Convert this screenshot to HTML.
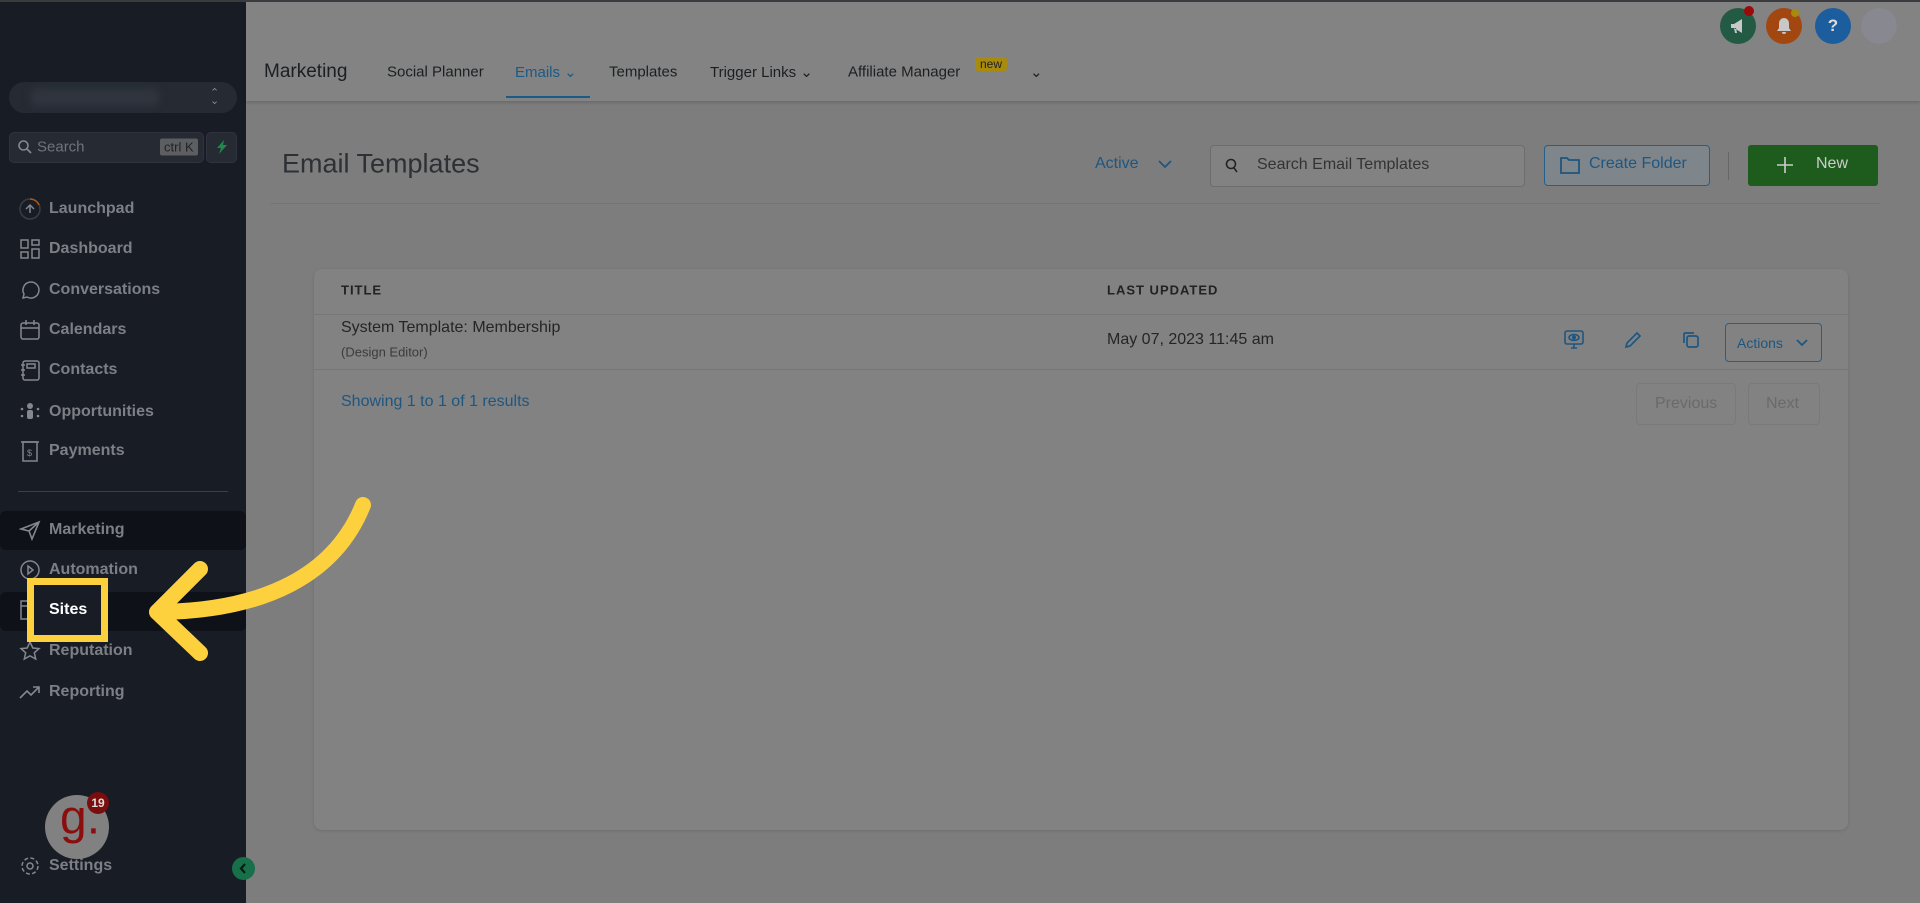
<!DOCTYPE html>
<html><head><meta charset="utf-8"><style>
*{box-sizing:border-box;margin:0;padding:0}
body{width:1920px;height:903px;overflow:hidden;background:#7d7d7d;font-family:"Liberation Sans",sans-serif;position:relative}
.sb{position:absolute;left:0;top:0;width:246px;height:903px;background:#181c25}
.it{position:absolute;left:49px;font-size:16px;font-weight:bold;color:#7c7f85;transform:translateY(-50%)}
.ic{position:absolute;left:19px;width:22px;height:22px;transform:translateY(-50%)}
.hdr{position:absolute;left:246px;top:2px;right:0;height:99px;background:#838383;box-shadow:0 2px 3px rgba(0,0,0,.15)}
.tab{position:absolute;top:72px;font-size:16px;color:#1c1f22;transform:translateY(-50%)}
.card{position:absolute;left:314px;top:269px;width:1534px;height:561px;background:#828282;border-radius:8px;box-shadow:0 1px 3px rgba(0,0,0,.12)}
.t{position:absolute;transform:translateY(-50%);white-space:nowrap}
</style></head><body>
<div class="sb">
 <div style="position:absolute;left:9px;top:82px;width:228px;height:31px;border-radius:16px;background:#252a33"></div>
 <div style="position:absolute;left:30px;top:88px;width:130px;height:18px;border-radius:9px;background:#30353e;filter:blur(4px)"></div>
 <div class="t" style="left:210px;top:97px;color:#888;font-size:11px;line-height:8px">⌃<br>⌄</div>
 <div style="position:absolute;left:9px;top:132px;width:195px;height:31px;border-radius:5px;background:#252a33;border:1px solid #2e333c"></div>
 <svg style="position:absolute;left:17px;top:139px" width="16" height="16" viewBox="0 0 16 16"><circle cx="6.5" cy="6.5" r="4.5" fill="none" stroke="#85888e" stroke-width="1.6"/><path d="M10 10l4 4" stroke="#85888e" stroke-width="1.8"/></svg>
 <div class="t" style="left:37px;top:147px;color:#70747a;font-size:15px">Search</div>
 <div class="t" style="left:160px;top:147px;background:#5c5e62;color:#222;font-size:13px;padding:1px 4px;border-radius:2px">ctrl K</div>
 <div style="position:absolute;left:206px;top:132px;width:31px;height:31px;border-radius:5px;background:#252a33;border:1px solid #2e333c"></div>
 <svg style="position:absolute;left:214px;top:139px" width="16" height="16" viewBox="0 0 16 16"><path d="M10 1L3 9h4l-2 6 8-9H9z" fill="#1f8a4c"/></svg>

 <svg class="ic" style="top:209px" viewBox="0 0 22 22"><circle cx="11" cy="11" r="10" fill="none" stroke="#3a3d44" stroke-width="1.5"/><path d="M11 1a10 10 0 0 1 9 6" stroke="#a55a17" stroke-width="1.5" fill="none"/><path d="M7 11l4-4 4 4M11 7v8" stroke="#84878d" stroke-width="1.5" fill="none"/></svg>
 <div class="it" style="top:209px">Launchpad</div>
 <svg class="ic" style="top:249px" viewBox="0 0 22 22" fill="none" stroke="#84878d" stroke-width="1.5"><rect x="2" y="2" width="7" height="8"/><rect x="13" y="2" width="7" height="5"/><rect x="2" y="14" width="7" height="6"/><rect x="13" y="11" width="7" height="9"/></svg>
 <div class="it" style="top:249px">Dashboard</div>
 <svg class="ic" style="top:290px" viewBox="0 0 22 22" fill="none" stroke="#84878d" stroke-width="1.5"><path d="M4 19l1-4a8 8 0 1 1 3 3z"/></svg>
 <div class="it" style="top:290px">Conversations</div>
 <svg class="ic" style="top:330px" viewBox="0 0 22 22" fill="none" stroke="#84878d" stroke-width="1.5"><rect x="2" y="4" width="18" height="16" rx="2"/><path d="M2 9h18M7 1v5M15 1v5"/></svg>
 <div class="it" style="top:330px">Calendars</div>
 <svg class="ic" style="top:370px" viewBox="0 0 22 22" fill="none" stroke="#84878d" stroke-width="1.5"><rect x="4" y="2" width="16" height="19" rx="2"/><rect x="8" y="5" width="8" height="4"/><path d="M2 6h4M2 11h4M2 16h4"/></svg>
 <div class="it" style="top:370px">Contacts</div>
 <svg class="ic" style="top:412px" viewBox="0 0 22 22" fill="#84878d"><circle cx="11" cy="5" r="3"/><rect x="8" y="9" width="6" height="9" rx="2"/><circle cx="3" cy="8" r="1.3"/><circle cx="19" cy="8" r="1.3"/><circle cx="3" cy="15" r="1.3"/><circle cx="19" cy="15" r="1.3"/></svg>
 <div class="it" style="top:412px">Opportunities</div>
 <svg class="ic" style="top:451px" viewBox="0 0 22 22" fill="none" stroke="#84878d" stroke-width="1.5"><rect x="4" y="2" width="14" height="19"/><path d="M2 2h18"/><text x="8" y="16" font-size="9" fill="#84878d" stroke="none">$</text></svg>
 <div class="it" style="top:451px">Payments</div>
 <div style="position:absolute;left:18px;top:491px;width:210px;height:1px;background:#3b3f47"></div>
 <div style="position:absolute;left:0;top:511px;width:246px;height:39px;border-radius:6px;background:#0e1118"></div>
 <svg class="ic" style="top:530px" viewBox="0 0 22 22" fill="none" stroke="#84878d" stroke-width="1.6"><path d="M2 10L20 3 13 20 10 12z M10 12l10-9"/></svg>
 <div class="it" style="top:530px">Marketing</div>
 <svg class="ic" style="top:570px" viewBox="0 0 22 22" fill="none" stroke="#84878d" stroke-width="1.5"><circle cx="11" cy="11" r="9"/><path d="M9 7l5 4-5 4z"/></svg>
 <div class="it" style="top:570px">Automation</div>
 <div style="position:absolute;left:0;top:592px;width:246px;height:39px;border-radius:6px;background:#0e1118"></div>
 <svg class="ic" style="top:610px" viewBox="0 0 22 22" fill="none" stroke="#84878d" stroke-width="1.5"><rect x="2" y="2" width="18" height="18"/><path d="M2 7h18"/></svg>
 <svg class="ic" style="top:651px" viewBox="0 0 22 22" fill="none" stroke="#84878d" stroke-width="1.5"><path d="M11 2l2.8 6 6.2.6-4.7 4.2 1.4 6.2L11 15.8 5.3 19l1.4-6.2L2 8.6 8.2 8z"/></svg>
 <div class="it" style="top:651px">Reputation</div>
 <svg class="ic" style="top:692px" viewBox="0 0 22 22" fill="none" stroke="#84878d" stroke-width="1.6"><path d="M1 17l7-7 4 4 8-8M14 6h6v6"/></svg>
 <div class="it" style="top:692px">Reporting</div>
 <svg class="ic" style="top:866px" viewBox="0 0 22 22" fill="none" stroke="#84878d" stroke-width="1.5"><circle cx="11" cy="11" r="3"/><circle cx="11" cy="11" r="8" stroke-dasharray="4 2.3"/></svg>
 <div class="it" style="top:866px">Settings</div>
 <div style="position:absolute;left:45px;top:795px;width:64px;height:64px;border-radius:50%;background:#818181"></div>
 <div class="t" style="left:60px;top:818px;color:#8b0e0e;font-size:48px">g.</div>
 <div style="position:absolute;left:87px;top:792px;width:22px;height:22px;border-radius:50%;background:#7a0d0d;color:#ddd;font-size:12px;font-weight:bold;text-align:center;line-height:22px">19</div>
</div>
<div style="position:absolute;left:232px;top:857px;width:23px;height:23px;border-radius:50%;background:#17704a"></div>
<svg style="position:absolute;left:237px;top:862px" width="13" height="13" viewBox="0 0 13 13"><path d="M8 2L4 6.5 8 11" fill="none" stroke="#0a1a10" stroke-width="2.2"/></svg>
<div style="position:absolute;left:0;top:0;width:1920px;height:2px;background:#3a3b3e"></div>

<div class="hdr"></div>
<div class="tab" style="left:264px;font-size:19px">Marketing</div>
<div class="tab" style="left:387px;font-size:15px">Social Planner</div>
<div class="tab" style="left:515px;font-size:15px;color:#1b5a86">Emails ⌄</div>
<div style="position:absolute;left:506px;top:96px;width:84px;height:2px;background:#1b5a86"></div>
<div class="tab" style="left:609px;font-size:15px">Templates</div>
<div class="tab" style="left:710px;font-size:15px">Trigger Links ⌄</div>
<div class="tab" style="left:848px;font-size:15px">Affiliate Manager</div>
<div class="t" style="left:975px;top:64px;background:#a88a0c;color:#222;font-size:12px;padding:0 5px;border-radius:3px">new</div>
<div class="tab" style="left:1030px;font-size:15px">⌄</div>
<div style="position:absolute;left:1720px;top:8px;width:36px;height:36px;border-radius:50%;background:#235a43"></div>
<svg style="position:absolute;left:1728px;top:16px" width="20" height="20" viewBox="0 0 20 20"><path d="M3 8h3l8-5v14l-8-5H3z M6 12l1 5h2l-1-5" fill="#c8c8c8"/></svg>
<div style="position:absolute;left:1744px;top:6px;width:10px;height:10px;border-radius:50%;background:#9a0a0a"></div>
<div style="position:absolute;left:1766px;top:8px;width:36px;height:36px;border-radius:50%;background:#a24710"></div>
<svg style="position:absolute;left:1774px;top:16px" width="20" height="20" viewBox="0 0 20 20"><path d="M10 2a5 5 0 0 0-5 5v5l-2 3h14l-2-3V7a5 5 0 0 0-5-5z M8 16a2 2 0 0 0 4 0" fill="#c8c8c8"/></svg>
<div style="position:absolute;left:1791px;top:9px;width:8px;height:8px;border-radius:50%;background:#a88a0c"></div>
<div style="position:absolute;left:1815px;top:8px;width:36px;height:36px;border-radius:50%;background:#1c5d9e;color:#ddd;font-weight:bold;font-size:17px;text-align:center;line-height:36px">?</div>
<div style="position:absolute;left:1861px;top:8px;width:36px;height:36px;border-radius:50%;background:#878890"></div>

<div class="t" style="left:282px;top:164px;font-size:27px;color:#2d3035">Email Templates</div>
<div class="t" style="left:1095px;top:164px;font-size:16px;color:#1e5680">Active</div>
<svg style="position:absolute;left:1157px;top:158px" width="16" height="12" viewBox="0 0 16 12"><path d="M2 3l6 6 6-6" fill="none" stroke="#1e5680" stroke-width="1.8"/></svg>
<div style="position:absolute;left:1210px;top:145px;width:315px;height:42px;border:1px solid #6d6d6d;border-radius:4px;background:#828282"></div>
<svg style="position:absolute;left:1225px;top:158px" width="14" height="16" viewBox="0 0 14 16"><circle cx="6" cy="6" r="4.5" fill="none" stroke="#222" stroke-width="1.6"/><path d="M9 10l3 4" stroke="#222" stroke-width="1.6"/></svg>
<div class="t" style="left:1257px;top:165px;font-size:16px;color:#333">Search Email Templates</div>
<div style="position:absolute;left:1544px;top:145px;width:166px;height:41px;border:1.5px solid #24608c;border-radius:4px;background:#7f868b"></div>
<svg style="position:absolute;left:1559px;top:155px" width="22" height="20" viewBox="0 0 22 20"><path d="M2 3h6l2 2h10v13H2z" fill="none" stroke="#1e5680" stroke-width="1.8"/></svg>
<div class="t" style="left:1589px;top:164px;font-size:16px;color:#1e5680">Create Folder</div>
<div style="position:absolute;left:1728px;top:152px;width:1px;height:28px;background:#666"></div>
<div style="position:absolute;left:1748px;top:145px;width:130px;height:41px;background:#1e5c1e;border-radius:3px"></div>
<svg style="position:absolute;left:1776px;top:156px" width="18" height="18" viewBox="0 0 18 18"><path d="M9 1v16M1 9h16" stroke="#ccc" stroke-width="1.6"/></svg>
<div class="t" style="left:1816px;top:164px;font-size:16px;color:#ccc">New</div>
<div style="position:absolute;left:270px;top:203px;width:1610px;height:1px;background:#757575"></div>

<div class="card">
 <div class="t" style="left:27px;top:21px;font-size:13px;font-weight:bold;letter-spacing:1px;color:#222">TITLE</div>
 <div class="t" style="left:793px;top:21px;font-size:13px;font-weight:bold;letter-spacing:1px;color:#222">LAST UPDATED</div>
 <div style="position:absolute;left:0;top:45px;width:100%;height:1px;background:#767676"></div>
 <div class="t" style="left:27px;top:59px;font-size:16px;color:#252525">System Template: Membership</div>
 <div class="t" style="left:27px;top:83px;font-size:13px;color:#3b3b3b">(Design Editor)</div>
 <div class="t" style="left:793px;top:71px;font-size:16px;color:#252525">May 07, 2023 11:45 am</div>
 <svg style="position:absolute;left:1250px;top:61px" width="20" height="20" viewBox="0 0 20 20" fill="none" stroke="#1e5680" stroke-width="1.6"><rect x="1" y="1" width="18" height="13" rx="2"/><ellipse cx="10" cy="7.5" rx="5" ry="3"/><circle cx="10" cy="7.5" r="1.3" fill="#1e5680"/><path d="M7 18h6M10 14v4"/></svg>
 <svg style="position:absolute;left:1309px;top:61px" width="20" height="20" viewBox="0 0 20 20" fill="none" stroke="#1e5680" stroke-width="1.7"><path d="M3 17l1-4L14 3l3 3L7 16z"/></svg>
 <svg style="position:absolute;left:1368px;top:62px" width="18" height="18" viewBox="0 0 18 18" fill="none" stroke="#1e5680" stroke-width="1.7"><rect x="5" y="5" width="11" height="11" rx="2"/><path d="M12 2H3a1 1 0 0 0-1 1v9"/></svg>
 <div style="position:absolute;left:1411px;top:54px;width:97px;height:39px;border:1.5px solid #24608c;border-radius:4px"></div>
 <div class="t" style="left:1423px;top:74px;font-size:14px;color:#1e5680">Actions</div>
 <svg style="position:absolute;left:1481px;top:69px" width="14" height="10" viewBox="0 0 14 10"><path d="M2 2l5 5 5-5" fill="none" stroke="#1e5680" stroke-width="1.8"/></svg>
 <div style="position:absolute;left:0;top:100px;width:100%;height:1px;background:#767676"></div>
 <div class="t" style="left:27px;top:133px;font-size:16px;color:#1e5680">Showing 1 to 1 of 1 results</div>
 <div style="position:absolute;left:1322px;top:114px;width:100px;height:42px;border:1px solid #7a7a7a;border-radius:4px"></div>
 <div class="t" style="left:1341px;top:135px;font-size:16px;color:#6a6a6a">Previous</div>
 <div style="position:absolute;left:1434px;top:114px;width:72px;height:42px;border:1px solid #7a7a7a;border-radius:4px"></div>
 <div class="t" style="left:1452px;top:135px;font-size:16px;color:#6a6a6a">Next</div>
</div>

<div style="position:absolute;left:27px;top:578px;width:81px;height:64px;background:#181c25;border:7px solid #fdd13e"></div>
<div class="t" style="left:49px;top:610px;font-size:16px;font-weight:bold;color:#fff">Sites</div>
<svg style="position:absolute;left:0;top:0" width="1920" height="903" viewBox="0 0 1920 903">
 <path d="M363 505 C335 575 265 610 162 612" fill="none" stroke="#fdd13e" stroke-width="16" stroke-linecap="round"/>
 <path d="M200 569 L157 612 L200 653" fill="none" stroke="#fdd13e" stroke-width="16" stroke-linecap="round" stroke-linejoin="round"/>
</svg>
</body></html>
